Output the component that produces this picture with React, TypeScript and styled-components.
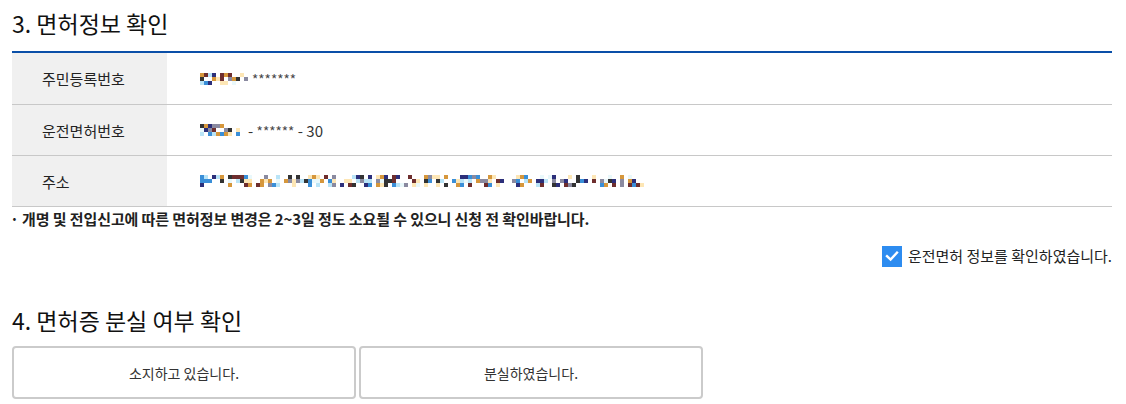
import React from "react";
import styled, { createGlobalStyle } from "styled-components";

const GlobalStyle = createGlobalStyle`
  body {
    margin: 0;
    background: #fff;
    font-family: "Noto Sans CJK KR", "Noto Sans", sans-serif;
    color: #333;
  }
  * {
    box-sizing: border-box;
  }
`;

const palette = [
  "#333333",
  "#2c2f7a",
  "#3a8fd8",
  "#b9e4f7",
  "#d6973c",
  "#fde6b5",
  "#6e2e2e",
  "#e9f8fb",
  "#8a8aa0",
];

// 모자이크 처리된 개인정보 (그림으로 그림)
function makeCells(cols: number, seed: number, gapEvery = 0) {
  let s = seed;
  const rand = () => {
    s = (s * 1103515245 + 12345) % 2147483648;
    return s / 2147483648;
  };
  const cells: { x: number; y: number; c: string }[] = [];
  for (let x = 0; x < cols; x++) {
    if (gapEvery && x % gapEvery === gapEvery - 1 && rand() > 0.3) continue;
    for (let y = 0; y < 3; y++) {
      const r = rand();
      if (y === 0 && r < 0.45) continue;
      if (y === 1 && r < 0.2) continue;
      if (y === 2 && r < 0.4) continue;
      cells.push({ x, y, c: palette[Math.floor(rand() * palette.length)] });
    }
  }
  return cells;
}

function Mosaic({ cols, seed, gap }: { cols: number; seed: number; gap?: number }) {
  const cells = React.useMemo(() => makeCells(cols, seed, gap), [cols, seed, gap]);
  return (
    <MosaicSvg width={cols * 4} height={12} viewBox={`0 0 ${cols * 4} 12`}>
      {cells.map((cell, i) => (
        <rect key={i} x={cell.x * 4} y={cell.y * 4} width={4} height={4} fill={cell.c} />
      ))}
    </MosaicSvg>
  );
}

const MosaicSvg = styled.svg`
  display: block;
  flex: none;
`;

const Page = styled.div`
  width: 1126px;
  padding: 7px 14px 0 12px;
`;

const SectionTitle = styled.h2<{ $tight?: boolean }>`
  margin: 0 0 ${(p) => (p.$tight ? 9 : 11)}px;
  font-size: 23px;
  font-weight: 400;
  line-height: 33px;
  color: #111;
`;

const InfoTable = styled.div`
  border-top: 2px solid #0a4fa8;
  border-bottom: 1px solid #c8c8c8;
`;

const Row = styled.div`
  display: grid;
  grid-template-columns: 155px 1fr;
  height: 51px;
  & + & {
    border-top: 1px solid #c8c8c8;
  }
`;

const Label = styled.div`
  display: flex;
  align-items: center;
  padding-left: 30px;
  background: #f0f0f0;
  font-size: 15px;
  color: #222;
`;

const Value = styled.div`
  display: flex;
  align-items: center;
  gap: 4px;
  padding-left: 33px;
  font-size: 15px;
  color: #333;
`;

const Stars = styled.span`
  font-size: 13.5px;
  color: #444;
`;

const Masked = styled.span`
  margin-left: 4px;
`;

const Notice = styled.p`
  margin: 2px 0 0 -2px;
  font-size: 15px;
  font-weight: 700;
  line-height: 20px;
  color: #222;
  letter-spacing: -0.1px;
`;

const ConfirmRow = styled.label`
  display: flex;
  justify-content: flex-end;
  align-items: center;
  gap: 6px;
  margin-top: 16px;
  font-size: 15px;
  line-height: 22px;
  color: #222;
`;

const CheckBox = styled.span`
  display: flex;
  align-items: center;
  justify-content: center;
  width: 20px;
  height: 21px;
  background: #2d8cf0;
`;

const Section = styled.section`
  margin-top: 37px;
`;

const ChoiceGrid = styled.div`
  display: grid;
  grid-template-columns: 344px 344px;
  gap: 3px;
`;

const ChoiceButton = styled.button`
  height: 53px;
  border: 2px solid #cbcbcb;
  border-radius: 4px;
  background: #fff;
  font-family: inherit;
  font-size: 14px;
  color: #333;
  cursor: pointer;
`;

export default function App() {
  return (
    <>
      <GlobalStyle />
      <Page>
        <SectionTitle>3. 면허정보 확인</SectionTitle>
        <InfoTable>
          <Row>
            <Label>주민등록번호</Label>
            <Value>
              <Mosaic cols={12} seed={17} />
              <Stars>*******</Stars>
            </Value>
          </Row>
          <Row>
            <Label>운전면허번호</Label>
            <Value>
              <Mosaic cols={10} seed={91} />
              <Masked>
                - <Stars>******</Stars> - 30
              </Masked>
            </Value>
          </Row>
          <Row>
            <Label>주소</Label>
            <Value>
              <Mosaic cols={111} seed={5} gap={7} />
            </Value>
          </Row>
        </InfoTable>
        <Notice>· 개명 및 전입신고에 따른 면허정보 변경은 2~3일 정도 소요될 수 있으니 신청 전 확인바랍니다.</Notice>
        <ConfirmRow>
          <CheckBox>
            <svg width="14" height="14" viewBox="0 0 14 14">
              <path d="M2 7.2 L5.6 10.6 L12 3.6" fill="none" stroke="#fff" strokeWidth="2.4" strokeLinecap="square" />
            </svg>
          </CheckBox>
          운전면허 정보를 확인하였습니다.
        </ConfirmRow>
        <Section>
          <SectionTitle $tight>4. 면허증 분실 여부 확인</SectionTitle>
          <ChoiceGrid>
            <ChoiceButton>소지하고 있습니다.</ChoiceButton>
            <ChoiceButton>분실하였습니다.</ChoiceButton>
          </ChoiceGrid>
        </Section>
      </Page>
    </>
  );
}
